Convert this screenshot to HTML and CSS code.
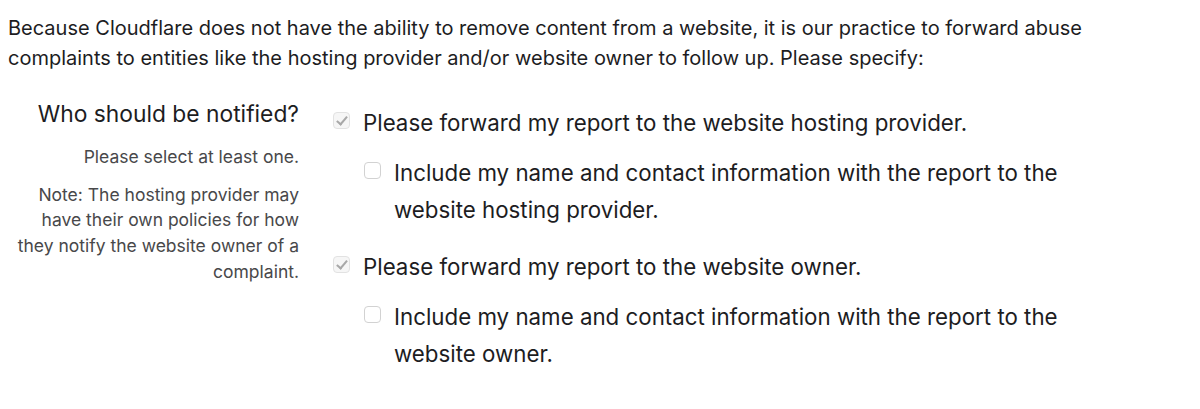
FILE: index.html
```html
<!DOCTYPE html>
<html lang="en">
<head>
    <meta charset="UTF-8">
    <meta name="viewport" content="width=device-width, initial-scale=1.0">
    <title>Abuse report - notification</title>
    <link rel="stylesheet" href="styles.css">
</head>
<body>
    <p class="intro">Because Cloudflare does not have the ability to remove content from a website, it is our practice to forward abuse complaints to entities like the hosting provider and/or website owner to follow up. Please specify:</p>

    <div class="field">
        <div class="field-label">
            <h3>Who should be notified?</h3>
            <p class="hint">Please select at least one.</p>
            <p class="note">Note: The hosting provider may have their own policies for how they notify the website owner of a complaint.</p>
        </div>

        <div class="options">
            <div class="group">
                <label class="option">
                    <span class="box checked"></span>
                    <span>Please forward my report to the website hosting provider.</span>
                </label>
                <label class="option sub">
                    <span class="box"></span>
                    <span>Include my name and contact information with the report to the website hosting provider.</span>
                </label>
            </div>
            <div class="group">
                <label class="option">
                    <span class="box checked"></span>
                    <span>Please forward my report to the website owner.</span>
                </label>
                <label class="option sub">
                    <span class="box"></span>
                    <span>Include my name and contact information with the report to the website owner.</span>
                </label>
            </div>
        </div>
    </div>
</body>
</html>
```

FILE: styles.css
```css
body {
    margin: 8px;
    font-family: Inter, "Noto Sans", sans-serif;
    color: #1d1d1f;
    background: white;
}
.intro {
    margin: 0;
    max-width: 1150px;
    font-size: 20px;
    line-height: 30px;
    padding-top: 5px;
}
.field {
    display: flex;
    margin-top: 25px;
}
.field-label {
    width: 291px;
    flex-shrink: 0;
    text-align: right;
}
.field-label h3 {
    margin: 0;
    font-size: 22.8px;
    font-weight: 400;
    line-height: 32px;
}
.hint,
.note {
    margin: 0;
    font-size: 17.5px;
    line-height: 25.7px;
    color: #48484a;
}
.hint {
    margin-top: 14px;
}
.note {
    margin-top: 12px;
}
.options {
    width: 770px;
    margin-left: 34px;
    padding-top: 6px;
}
.group {
    margin-bottom: 20px;
}
.option {
    display: flex;
    align-items: flex-start;
    gap: 13px;
    font-size: 22.3px;
    line-height: 37px;
    margin-bottom: 13px;
}
.option.sub {
    margin-left: 31px;
}
.box {
    width: 15px;
    height: 15px;
    flex-shrink: 0;
    margin-top: 8px;
    border: 1px solid #d2d2d2;
    border-radius: 4px;
    background: #fff;
    position: relative;
}
.box.checked {
    background: #f6f6f6;
    border-color: #e2e2e2;
}
.box.checked::after {
    content: "";
    position: absolute;
    left: 5px;
    top: 1px;
    width: 4px;
    height: 9px;
    border: solid #a8a8a8;
    border-width: 0 2px 2px 0;
    transform: rotate(40deg);
}
```
